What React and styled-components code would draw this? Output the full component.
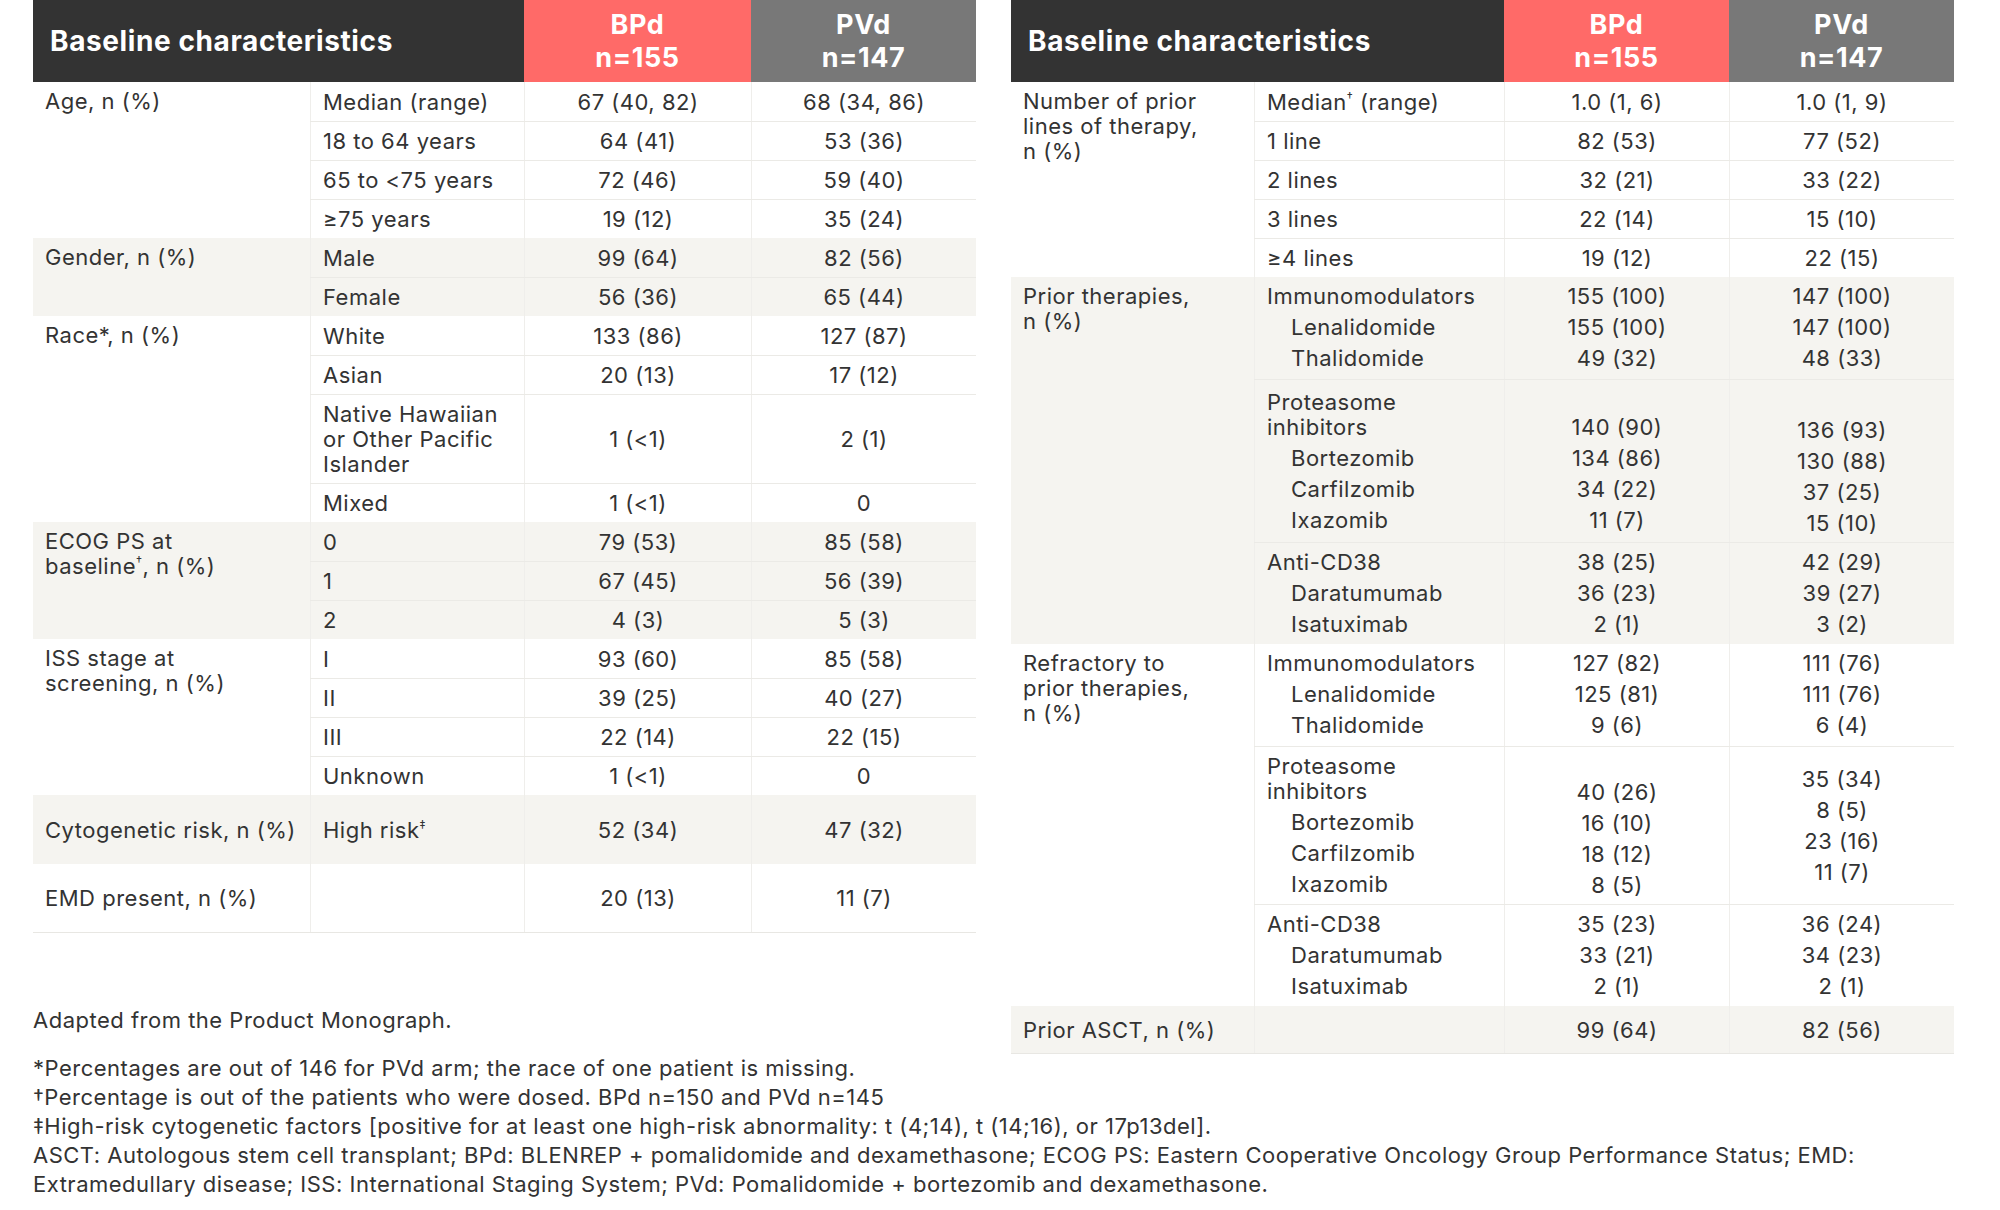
import React from 'react'
import styled, { createGlobalStyle } from 'styled-components'

const GlobalStyle = createGlobalStyle`
    body {
        margin: 0;
        background: #ffffff;
        font-family: Inter, 'Noto Sans', sans-serif;
        color: #333333;
    }
`

const Page = styled.div`
    width: 2000px;
    padding-left: 33px;
    box-sizing: border-box;
    font-size: 22px;
    letter-spacing: 0.5px;
`

const TablesRow = styled.div`
    display: flex;
    gap: 35px;
    align-items: flex-start;
`

const Column = styled.div`
    display: flex;
    flex-direction: column;
    width: 943px;
`

const Table = styled.div`
    width: 943px;
    border-bottom: 1px solid #e8e7e3;
`

const HeadRow = styled.div`
    display: grid;
    grid-template-columns: ${props => props.cols};
    height: 82px;
`

const TitleCell = styled.div`
    background: #333333;
    color: #ffffff;
    font-weight: 700;
    font-size: 28px;
    letter-spacing: 0.6px;
    display: flex;
    align-items: center;
    padding-left: 17px;
`

const ArmCell = styled.div`
    background: ${props => props.color};
    color: #ffffff;
    font-weight: 700;
    font-size: 27px;
    letter-spacing: 0.6px;
    line-height: 33px;
    text-align: center;
    display: flex;
    flex-direction: column;
    justify-content: center;
`

const Section = styled.div`
    display: grid;
    grid-template-columns: ${props => props.labelW}px 1fr;
    background: ${props => (props.alt ? '#f5f4f0' : '#ffffff')};
`

const Label = styled.div`
    padding: 7px 12px 6px;
    line-height: 25px;
    white-space: pre-line;
    display: flex;
    align-items: ${props => (props.center ? 'center' : 'flex-start')};
`

const Rows = styled.div`
    display: flex;
    flex-direction: column;
`

const Row = styled.div`
    display: grid;
    grid-template-columns: ${props => props.cols};
    min-height: ${props => props.h || 39}px;
    box-sizing: border-box;
    border-top: ${props => (props.first ? 'none' : '1px solid #ebeae6')};
`

const Cell = styled.div`
    padding: 7px 12px ${props => (props.pb != null ? props.pb : 6)}px;
    border-left: 1px solid #efeeeb;
    display: flex;
    flex-direction: column;
    justify-content: ${props => props.v || 'center'};
    gap: 6px;
    line-height: 25px;
    white-space: pre-line;
`

const ValCell = styled(Cell)`
    align-items: center;
    text-align: center;
`

const Item = styled.div`
    padding-left: ${props => (props.indent ? 24 : 0)}px;
`

const Sup = styled.sup`
    font-size: 0.55em;
    line-height: 0;
    vertical-align: 0.75em;
`

const Adapted = styled.p`
    margin: 73px 0 0;
    line-height: 29px;
`

const Notes = styled.div`
    line-height: 29px;
`

const Note = styled.p`
    margin: 0;
`

const leftCols = { label: 277, rest: '214px 227px 225px', head: '491px 227px 225px' }
const rightCols = { label: 243, rest: '250px 225px 225px', head: '493px 225px 225px' }

const leftSections = [
    {
        label: 'Age, n (%)',
        rows: [
            { sub: 'Median (range)', bpd: '67 (40, 82)', pvd: '68 (34, 86)' },
            { sub: '18 to 64 years', bpd: '64 (41)', pvd: '53 (36)' },
            { sub: '65 to <75 years', bpd: '72 (46)', pvd: '59 (40)' },
            { sub: '≥75 years', bpd: '19 (12)', pvd: '35 (24)' },
        ],
    },
    {
        label: 'Gender, n (%)',
        alt: true,
        rows: [
            { sub: 'Male', bpd: '99 (64)', pvd: '82 (56)' },
            { sub: 'Female', bpd: '56 (36)', pvd: '65 (44)' },
        ],
    },
    {
        label: 'Race*, n (%)',
        rows: [
            { sub: 'White', bpd: '133 (86)', pvd: '127 (87)' },
            { sub: 'Asian', bpd: '20 (13)', pvd: '17 (12)' },
            { sub: 'Native Hawaiian\nor Other Pacific\nIslander', bpd: '1 (<1)', pvd: '2 (1)' },
            { sub: 'Mixed', bpd: '1 (<1)', pvd: '0' },
        ],
    },
    {
        label: (
            <>
                ECOG PS at{'\n'}baseline<Sup>†</Sup>, n (%)
            </>
        ),
        alt: true,
        rows: [
            { sub: '0', bpd: '79 (53)', pvd: '85 (58)' },
            { sub: '1', bpd: '67 (45)', pvd: '56 (39)' },
            { sub: '2', bpd: '4 (3)', pvd: '5 (3)' },
        ],
    },
    {
        label: 'ISS stage at\nscreening, n (%)',
        rows: [
            { sub: 'I', bpd: '93 (60)', pvd: '85 (58)' },
            { sub: 'II', bpd: '39 (25)', pvd: '40 (27)' },
            { sub: 'III', bpd: '22 (14)', pvd: '22 (15)' },
            { sub: 'Unknown', bpd: '1 (<1)', pvd: '0' },
        ],
    },
    {
        label: 'Cytogenetic risk, n (%)',
        alt: true,
        center: true,
        rows: [
            {
                sub: (
                    <>
                        High risk<Sup>‡</Sup>
                    </>
                ),
                bpd: '52 (34)',
                pvd: '47 (32)',
                h: 69,
            },
        ],
    },
    {
        label: 'EMD present, n (%)',
        center: true,
        rows: [{ sub: '', bpd: '20 (13)', pvd: '11 (7)', h: 68 }],
    },
]

const immuno = (a, b) => ({
    items: [
        ['Immunomodulators', 0],
        ['Lenalidomide', 1],
        ['Thalidomide', 1],
    ],
    bpd: a,
    pvd: b,
    h: 102,
})

const antiCd38 = (a, b) => ({
    items: [
        ['Anti-CD38', 0],
        ['Daratumumab', 1],
        ['Isatuximab', 1],
    ],
    bpd: a,
    pvd: b,
    h: 102,
})

const proteasome = [
    ['Proteasome\ninhibitors', 0],
    ['Bortezomib', 1],
    ['Carfilzomib', 1],
    ['Ixazomib', 1],
]

const rightSections = [
    {
        label: 'Number of prior\nlines of therapy,\nn (%)',
        rows: [
            {
                sub: (
                    <>
                        Median<Sup>†</Sup> (range)
                    </>
                ),
                bpd: '1.0 (1, 6)',
                pvd: '1.0 (1, 9)',
            },
            { sub: '1 line', bpd: '82 (53)', pvd: '77 (52)' },
            { sub: '2 lines', bpd: '32 (21)', pvd: '33 (22)' },
            { sub: '3 lines', bpd: '22 (14)', pvd: '15 (10)' },
            { sub: '≥4 lines', bpd: '19 (12)', pvd: '22 (15)' },
        ],
    },
    {
        label: 'Prior therapies,\nn (%)',
        alt: true,
        groups: [
            immuno(['155 (100)', '155 (100)', '49 (32)'], ['147 (100)', '147 (100)', '48 (33)']),
            {
                items: proteasome,
                bpd: ['140 (90)', '134 (86)', '34 (22)', '11 (7)'],
                pvd: ['136 (93)', '130 (88)', '37 (25)', '15 (10)'],
                subV: 'center',
                bpdV: 'flex-end',
                bpdPb: 9,
                pvdV: 'flex-end',
                pvdPb: 6,
                h: 163,
            },
            antiCd38(['38 (25)', '36 (23)', '2 (1)'], ['42 (29)', '39 (27)', '3 (2)']),
        ],
    },
    {
        label: 'Refractory to\nprior therapies,\nn (%)',
        groups: [
            immuno(['127 (82)', '125 (81)', '9 (6)'], ['111 (76)', '111 (76)', '6 (4)']),
            {
                items: proteasome,
                bpd: ['40 (26)', '16 (10)', '18 (12)', '8 (5)'],
                pvd: ['35 (34)', '8 (5)', '23 (16)', '11 (7)'],
                bpdV: 'flex-end',
                pvdV: 'center',
                h: 158,
            },
            antiCd38(['35 (23)', '33 (21)', '2 (1)'], ['36 (24)', '34 (23)', '2 (1)']),
        ],
    },
    {
        label: 'Prior ASCT, n (%)',
        alt: true,
        center: true,
        rows: [{ sub: '', bpd: '99 (64)', pvd: '82 (56)', h: 47 }],
    },
]

const SimpleRow = ({ row, cols, first }) => (
    <Row cols={cols} first={first} h={row.h}>
        <Cell>
            <div>{row.sub}</div>
        </Cell>
        <ValCell>
            <div>{row.bpd}</div>
        </ValCell>
        <ValCell>
            <div>{row.pvd}</div>
        </ValCell>
    </Row>
)

const GroupRow = ({ group, cols, first }) => (
    <Row cols={cols} first={first} h={group.h}>
        <Cell v={group.subV || 'flex-start'}>
            {group.items.map(([text, indent]) => (
                <Item key={text} indent={indent}>
                    {text}
                </Item>
            ))}
        </Cell>
        <ValCell v={group.bpdV || 'flex-start'} pb={group.bpdPb}>
            {group.bpd.map((v, i) => (
                <div key={i}>{v}</div>
            ))}
        </ValCell>
        <ValCell v={group.pvdV || 'flex-start'} pb={group.pvdPb}>
            {group.pvd.map((v, i) => (
                <div key={i}>{v}</div>
            ))}
        </ValCell>
    </Row>
)

const DataTable = ({ cols, sections }) => (
    <Table>
        <HeadRow cols={cols.head}>
            <TitleCell>Baseline characteristics</TitleCell>
            <ArmCell color="#ff6a68">
                <span>BPd</span>
                <span>n=155</span>
            </ArmCell>
            <ArmCell color="#787878">
                <span>PVd</span>
                <span>n=147</span>
            </ArmCell>
        </HeadRow>
        {sections.map((section, si) => (
            <Section key={si} labelW={cols.label} alt={section.alt}>
                <Label center={section.center}>
                    <div>{section.label}</div>
                </Label>
                <Rows>
                    {section.rows &&
                        section.rows.map((row, i) => (
                            <SimpleRow key={i} row={row} cols={cols.rest} first={i === 0} />
                        ))}
                    {section.groups &&
                        section.groups.map((group, i) => (
                            <GroupRow key={i} group={group} cols={cols.rest} first={i === 0} />
                        ))}
                </Rows>
            </Section>
        ))}
    </Table>
)

const App = () => (
    <Page>
        <GlobalStyle />
        <TablesRow>
            <Column>
                <DataTable cols={leftCols} sections={leftSections} />
                <Adapted>Adapted from the Product Monograph.</Adapted>
            </Column>
            <Column>
                <DataTable cols={rightCols} sections={rightSections} />
            </Column>
        </TablesRow>
        <Notes>
            <Note>*Percentages are out of 146 for PVd arm; the race of one patient is missing.</Note>
            <Note>†Percentage is out of the patients who were dosed. BPd n=150 and PVd n=145</Note>
            <Note>
                ‡High-risk cytogenetic factors [positive for at least one high-risk abnormality: t (4;14), t
                (14;16), or 17p13del].
            </Note>
            <Note>
                ASCT: Autologous stem cell transplant; BPd: BLENREP + pomalidomide and dexamethasone; ECOG PS:
                Eastern Cooperative Oncology Group Performance Status; EMD:
                <br />
                Extramedullary disease; ISS: International Staging System; PVd: Pomalidomide + bortezomib and
                dexamethasone.
            </Note>
        </Notes>
    </Page>
)

export default App
